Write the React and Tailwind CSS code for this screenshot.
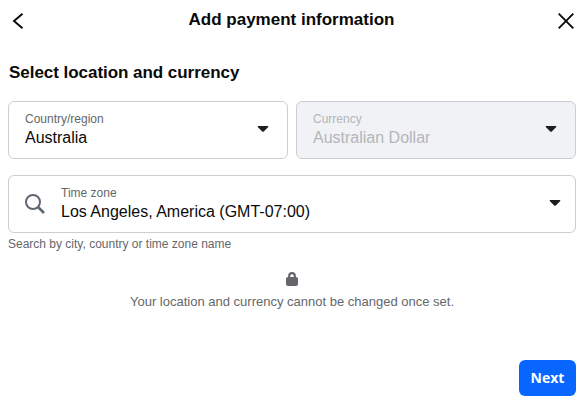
function Caret() {
  return (
    <svg width="12" height="6" viewBox="0 0 12 6" className="relative -top-px shrink-0 fill-[#1c1e21]">
      <path d="M1 0h10q.6.7 0 1.3L6.8 5.5q-.8.7-1.6 0L1 1.3Q.4.7 1 0z" />
    </svg>
  );
}

function Field({ label, value, disabled }) {
  return (
    <button
      disabled={disabled}
      className={`flex h-[58px] w-[280px] items-center justify-between rounded-md border border-[#ccced2] pl-4 pr-[18px] text-left ${disabled ? "bg-[#f0f2f5] text-[#b4b6ba]" : "bg-white text-[#0a0a0a]"}`}
    >
      <span className="flex flex-col pb-1">
        <span className={`text-xs leading-[18px] ${disabled ? "" : "text-[#65676b]"}`}>{label}</span>
        <span className="text-base leading-[19px]">{value}</span>
      </span>
      <Caret />
    </button>
  );
}

function App() {
  return (
    <div className="flex h-[406px] w-[586px] flex-col bg-white px-2 font-['Liberation_Sans',sans-serif] text-[#0a0a0a]">
      <header className="flex h-10 items-center justify-between pl-1 pr-1 pt-0.5">
        <svg width="12" height="16" viewBox="0 0 12 16" fill="none" stroke="currentColor" strokeWidth="1.9">
          <path d="M10.5.7L2 8l8.5 7.3" />
        </svg>
        <h1 className="pb-0.5 pl-px text-[17px] leading-5 font-bold">Add payment information</h1>
        <svg width="16" height="16" viewBox="0 0 16 16" fill="none" stroke="currentColor" strokeWidth="1.9">
          <path d="M.7.7l14.6 14.6M15.3.7L.7 15.3" />
        </svg>
      </header>

      <h2 className="mt-[21px] pl-px text-[17px] leading-6 font-bold tracking-[-0.04px]">Select location and currency</h2>

      <div className="mt-4 flex gap-2">
        <Field label="Country/region" value="Australia" />
        <Field label="Currency" value="Australian Dollar" disabled />
      </div>

      <button className="mt-4 flex h-[58px] w-[568px] items-center rounded-md border border-[#ccced2] pl-4 pr-3.5 text-left">
        <svg width="20" height="20" viewBox="0 0 20 20" fill="none" stroke="#606770" strokeWidth="2">
          <circle cx="8" cy="8" r="7" />
          <path d="M13 13l6 6" strokeWidth="2.6" />
        </svg>
        <span className="ml-4 flex grow flex-col pb-1">
          <span className="text-xs leading-[18px] text-[#65676b]">Time zone</span>
          <span className="text-base leading-[19px]">Los Angeles, America (GMT-07:00)</span>
        </span>
        <Caret />
      </button>
      <p className="mt-0.5 text-xs leading-[18px] text-[#65676b]">Search by city, country or time zone name</p>

      <div className="mt-[19px] flex flex-col items-center pr-0.5 text-[#65676b]">
        <svg width="12" height="14" viewBox="0 0 12 14" fill="currentColor">
          <rect y="5" width="12" height="9" rx="2" />
          <path d="M3.2 6V4a2.8 2.8 0 0 1 5.6 0v2" fill="none" stroke="currentColor" strokeWidth="2.2" />
        </svg>
        <p className="mt-[7px] text-[13px] leading-[18px]">Your location and currency cannot be changed once set.</p>
      </div>

      <button className="mt-auto mr-0.5 mb-2.5 h-9 w-[57px] self-end rounded-md bg-[#0866ff] font-['Open_Sans',sans-serif] text-sm font-bold text-white">Next</button>
    </div>
  );
}

export default App;
